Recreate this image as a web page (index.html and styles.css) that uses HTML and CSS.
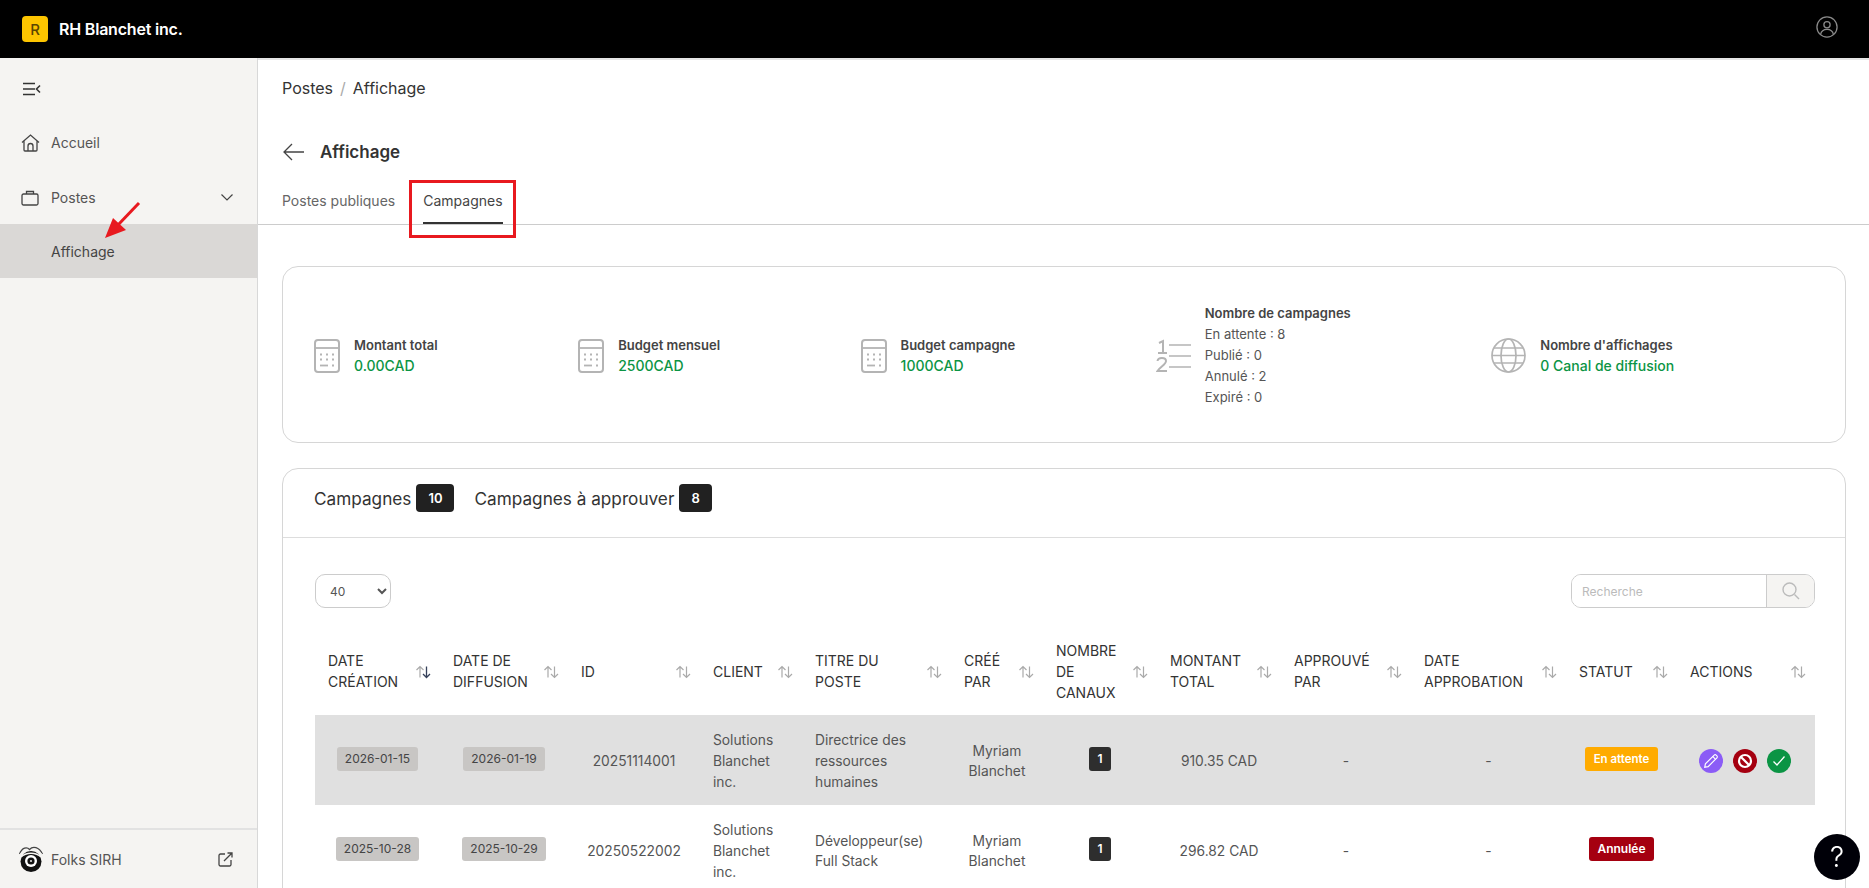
FILE: index.html
```html
<!DOCTYPE html>
<html lang="fr">
<head>
    <meta charset="UTF-8">
    <title>Affichage - RH Blanchet inc.</title>
    <link rel="stylesheet" href="styles.css">
</head>
<body>

<svg class="defs" width="0" height="0">
    <symbol id="sort" viewBox="0 0 16 16">
        <path d="M5 13.500V2.500M1.500 6l3.500-3.500L8.500 6" fill="none" stroke="#aaa" stroke-width="1.200"/>
        <path d="M11.500 2.500v11M8 10l3.500 3.500L15 10" fill="none" stroke="#aaa" stroke-width="1.200"/>
    </symbol>
    <symbol id="sort-active" viewBox="0 0 16 16">
        <path d="M5 13.500V2.500M1.500 6l3.500-3.500L8.500 6" fill="none" stroke="#aaa" stroke-width="1.200"/>
        <path d="M11.500 2.500v11M8 10l3.500 3.500L15 10" fill="none" stroke="#34405a" stroke-width="1.300"/>
    </symbol>
    <symbol id="calc" viewBox="0 0 26 34">
        <rect x="1" y="1" width="24" height="32" rx="3" fill="none" stroke="#b4b4b4" stroke-width="2"/>
        <path d="M1 9h24" stroke="#b4b4b4" stroke-width="1.800"/>
        <path d="M6 15.500h2M12 15.500h2M18 15.500h2M6 20.500h2M12 20.500h2M18 20.500h2M18 26.500h2" stroke="#b4b4b4" stroke-width="1.800"/>
        <path d="M6 26.500h8" stroke="#b4b4b4" stroke-width="1.800"/>
    </symbol>
</svg>

<header class="topbar">
    <div class="brand">
        <span class="brand-logo">R</span>
        <span class="brand-name">RH Blanchet inc.</span>
    </div>
    <svg class="user-icon" width="22" height="22" viewBox="0 0 24 24" fill="none" stroke="#8a8a8a" stroke-width="1.400">
        <circle cx="12" cy="12" r="11"/>
        <circle cx="12" cy="9.500" r="3.400"/>
        <path d="M5 20c.8-3.800 3.700-5.500 7-5.500s6.200 1.700 7 5.500"/>
    </svg>
</header>

<div class="layout">
    <aside class="sidebar">
        <div class="side-toggle">
            <svg width="18" height="14" viewBox="0 0 18 14" fill="none" stroke="#333" stroke-width="1.600">
                <path d="M0 1.500h12M0 7h12M0 12.500h12M17 3.500L13.500 7l3.500 3.500"/>
            </svg>
        </div>
        <nav class="side-nav">
            <a class="side-item">
                <svg width="19" height="18" viewBox="0 0 19 18" fill="none" stroke="#444" stroke-width="1.300">
                    <path d="M1 8.500L9.500 1 18 8.500M3 7v9a1 1 0 0 0 1 1h11a1 1 0 0 0 1-1V7M7 17v-5a2.500 2.500 0 0 1 5 0v5"/>
                </svg>
                Accueil
            </a>
            <a class="side-item side-item-open">
                <svg width="19" height="16" viewBox="0 0 19 16" fill="none" stroke="#444" stroke-width="1.300">
                    <rect x="1" y="4" width="16" height="11" rx="1.500"/>
                    <path d="M5.500 4V1.500h7V4"/>
                </svg>
                Postes
                <svg class="chevron" width="12" height="7" viewBox="0 0 12 7" fill="none" stroke="#444" stroke-width="1.200">
                    <path d="M.5.500L6 6l5.500-5.500"/>
                </svg>
            </a>
            <a class="side-sub">Affichage</a>
        </nav>
        <svg class="red-arrow" width="36" height="38" viewBox="0 0 36 38">
            <path d="M34 2L12 25" stroke="#e8191f" stroke-width="3" fill="none"/>
            <path d="M0 37l8-20 13 12z" fill="#e8191f"/>
        </svg>
        <div class="side-footer">
            <svg width="26" height="28" viewBox="0 0 26 28">
                <path d="M1.500 9C4 2.500 9 1.500 11.500 4.500 15 .5 21 2 24.500 9" fill="none" stroke="#444" stroke-width="1.200"/>
                <path d="M1.500 9.500C5 6 8 7 10.500 8.500c3-2 9-3 14 1" fill="none" stroke="#f5f4f2" stroke-width="1"/>
                <circle cx="13" cy="16.500" r="10.500" fill="#111"/>
                <path d="M3 12c5-5 15-5 20 0" fill="none" stroke="#f5f4f2" stroke-width="1.500"/>
                <circle cx="13" cy="16" r="6" fill="#fff"/>
                <circle cx="13" cy="16" r="3.600" fill="#111"/>
                <circle cx="13" cy="16" r="1.100" fill="#ddd"/>
            </svg>
            <span class="footer-label">Folks SIRH</span>
            <svg class="external" width="15" height="15" viewBox="0 0 15 15" fill="none" stroke="#444" stroke-width="1.300">
                <path d="M7 2H2.500A1.500 1.500 0 0 0 1 3.500v9A1.500 1.500 0 0 0 2.500 14h9a1.500 1.500 0 0 0 1.500-1.500V8M6 9l8-8M9.500 1H14v4.500"/>
            </svg>
        </div>
    </aside>

    <main class="main">
        <div class="breadcrumb">
            <span>Postes</span>
            <span class="crumb-sep">/</span>
            <span>Affichage</span>
        </div>
        <div class="page-title">
            <svg width="21" height="18" viewBox="0 0 21 18" fill="none" stroke="#444" stroke-width="1.300">
                <path d="M21 9H1M9 1L1 9l8 8"/>
            </svg>
            <h1>Affichage</h1>
        </div>
        <div class="page-tabs">
            <a class="page-tab">Postes publiques</a>
            <a class="page-tab page-tab-active">Campagnes</a>
        </div>

        <section class="card stats">
            <div class="stat">
                <svg width="26" height="34"><use href="#calc"/></svg>
                <div>
                    <div class="stat-title">Montant total</div>
                    <div class="stat-value">0.00CAD</div>
                </div>
            </div>
            <div class="stat">
                <svg width="26" height="34"><use href="#calc"/></svg>
                <div>
                    <div class="stat-title">Budget mensuel</div>
                    <div class="stat-value">2500CAD</div>
                </div>
            </div>
            <div class="stat">
                <svg width="26" height="34"><use href="#calc"/></svg>
                <div>
                    <div class="stat-title">Budget campagne</div>
                    <div class="stat-value">1000CAD</div>
                </div>
            </div>
            <div class="stat">
                <svg width="35" height="34" viewBox="0 0 35 34" fill="none" stroke="#b4b4b4" stroke-width="1.700">
                    <path d="M13 6h22M13 17h22M13 28h22"/>
                    <path d="M3 4l4-2v12M2 14h9" stroke-width="2"/>
                    <path d="M1.500 22c.5-4 8.500-4 8.500 0 0 3.500-6 6-8.500 10H11" stroke-width="2"/>
                </svg>
                <div>
                    <div class="stat-title">Nombre de campagnes</div>
                    <div class="stat-line">En attente : 8</div>
                    <div class="stat-line">Publié : 0</div>
                    <div class="stat-line">Annulé : 2</div>
                    <div class="stat-line">Expiré : 0</div>
                </div>
            </div>
            <div class="stat">
                <svg width="35" height="35" viewBox="0 0 35 35" fill="none" stroke="#b4b4b4" stroke-width="1.700">
                    <circle cx="17.500" cy="17.500" r="16.500"/>
                    <ellipse cx="17.500" cy="17.500" rx="7.500" ry="16.500"/>
                    <path d="M3 10h29M3 25h29M1 17.500h33"/>
                </svg>
                <div>
                    <div class="stat-title">Nombre d'affichages</div>
                    <div class="stat-value">0 Canal de diffusion</div>
                </div>
            </div>
        </section>

        <section class="card campaigns">
            <div class="campaign-tabs">
                <span class="campaign-tab">Campagnes <b class="count">10</b></span>
                <span class="campaign-tab">Campagnes à approuver <b class="count">8</b></span>
            </div>
            <div class="campaign-body">
                <div class="toolbar">
                    <select class="page-size">
                        <option>40</option>
                    </select>
                    <div class="search">
                        <input type="text" placeholder="Recherche">
                        <button class="search-btn">
                            <svg width="18" height="18" viewBox="0 0 18 18" fill="none" stroke="#bbb" stroke-width="1.400">
                                <circle cx="7.500" cy="7.500" r="6.500"/>
                                <path d="M12.500 12.500L17 17"/>
                            </svg>
                        </button>
                    </div>
                </div>

                <table class="grid">
                    <colgroup>
                        <col class="c-125"><col class="c-128"><col class="c-132"><col class="c-102">
                        <col class="c-149"><col class="c-92"><col class="c-114"><col class="c-124">
                        <col class="c-130"><col class="c-155"><col class="c-111"><col class="c-138">
                    </colgroup>
                    <thead>
                        <tr>
                            <th><div class="th-in"><span>Date<br>création</span><svg width="16" height="16"><use href="#sort-active"/></svg></div></th>
                            <th><div class="th-in"><span>Date de<br>diffusion</span><svg width="16" height="16"><use href="#sort"/></svg></div></th>
                            <th><div class="th-in"><span>ID</span><svg width="16" height="16"><use href="#sort"/></svg></div></th>
                            <th><div class="th-in"><span>Client</span><svg width="16" height="16"><use href="#sort"/></svg></div></th>
                            <th><div class="th-in"><span>Titre du<br>poste</span><svg width="16" height="16"><use href="#sort"/></svg></div></th>
                            <th><div class="th-in"><span>Créé<br>par</span><svg width="16" height="16"><use href="#sort"/></svg></div></th>
                            <th><div class="th-in"><span>Nombre<br>de<br>canaux</span><svg width="16" height="16"><use href="#sort"/></svg></div></th>
                            <th><div class="th-in"><span>Montant<br>total</span><svg width="16" height="16"><use href="#sort"/></svg></div></th>
                            <th><div class="th-in"><span>Approuvé<br>par</span><svg width="16" height="16"><use href="#sort"/></svg></div></th>
                            <th><div class="th-in"><span>Date<br>approbation</span><svg width="16" height="16"><use href="#sort"/></svg></div></th>
                            <th><div class="th-in"><span>Statut</span><svg width="16" height="16"><use href="#sort"/></svg></div></th>
                            <th><div class="th-in"><span>Actions</span><svg width="16" height="16"><use href="#sort"/></svg></div></th>
                        </tr>
                    </thead>
                    <tbody>
                        <tr class="row-hover">
                            <td><span class="tag tag-date">2026-01-15</span></td>
                            <td><span class="tag tag-date">2026-01-19</span></td>
                            <td>20251114001</td>
                            <td class="left">Solutions Blanchet inc.</td>
                            <td class="left">Directrice des ressources humaines</td>
                            <td>Myriam Blanchet</td>
                            <td><span class="tag tag-dark">1</span></td>
                            <td>910.35 CAD</td>
                            <td>-</td>
                            <td>-</td>
                            <td><span class="tag tag-pending">En attente</span></td>
                            <td>
                                <div class="actions">
                                    <span class="action action-edit">
                                        <svg width="16" height="16" viewBox="0 0 14 14" fill="none" stroke="#fff" stroke-width="1">
                                            <path d="M1.500 12.500l.6-3L9.800 1.800a1.200 1.200 0 0 1 1.700 0l.7.7a1.200 1.200 0 0 1 0 1.700L4.500 11.900z"/>
                                            <path d="M8.500 3l2.500 2.500"/>
                                        </svg>
                                    </span>
                                    <span class="action action-block">
                                        <svg width="16" height="16" viewBox="0 0 16 16" fill="none" stroke="#fff" stroke-width="2.200">
                                            <circle cx="8" cy="8" r="6"/>
                                            <path d="M4 4l8 8"/>
                                        </svg>
                                    </span>
                                    <span class="action action-ok">
                                        <svg width="14" height="12" viewBox="0 0 14 12" fill="none" stroke="#fff" stroke-width="1.300">
                                            <path d="M1.500 6.500L5 10l7.500-8.500"/>
                                        </svg>
                                    </span>
                                </div>
                            </td>
                        </tr>
                        <tr>
                            <td><span class="tag tag-date">2025-10-28</span></td>
                            <td><span class="tag tag-date">2025-10-29</span></td>
                            <td>20250522002</td>
                            <td class="left">Solutions Blanchet inc.</td>
                            <td class="left">Développeur(se) Full Stack</td>
                            <td>Myriam Blanchet</td>
                            <td><span class="tag tag-dark">1</span></td>
                            <td>296.82 CAD</td>
                            <td>-</td>
                            <td>-</td>
                            <td><span class="tag tag-cancel">Annulée</span></td>
                            <td></td>
                        </tr>
                    </tbody>
                </table>
            </div>
        </section>
    </main>
</div>

<button class="help">?</button>

</body>
</html>
```

FILE: styles.css
```css
* {
    box-sizing: border-box;
}

body {
    margin: 0;
    height: 888px;
    overflow: hidden;
    font-family: Inter, "Liberation Sans", sans-serif;
    color: #444;
    background-color: #fff;
}

.defs {
    position: absolute;
}

.topbar {
    height: 58px;
    padding: 0 31px 0 22px;
    display: flex;
    align-items: center;
    justify-content: space-between;
    background-color: #000;
}

.user-icon {
    margin-top: -4px;
}

.brand {
    display: flex;
    align-items: center;
    gap: 11px;
}

.brand-logo {
    width: 26px;
    height: 26px;
    display: flex;
    align-items: center;
    justify-content: center;
    border-radius: 4px;
    background-color: #fdc500;
    color: #5a4500;
    font-size: 15px;
    font-weight: 500;
}

.brand-name {
    color: #fff;
    font-size: 16px;
    font-weight: 600;
    letter-spacing: -0.2px;
}

.layout {
    display: flex;
    height: 830px;
}

/* sidebar */
.sidebar {
    position: relative;
    width: 258px;
    flex-shrink: 0;
    display: flex;
    flex-direction: column;
    background-color: #f5f4f2;
    border-right: 1px solid #d8d8d8;
}

.side-toggle {
    height: 50px;
    padding: 22px 0 0 23px;
}

.side-nav {
    flex: 1;
    padding-top: 6px;
}

.side-item {
    height: 55px;
    padding: 2px 0 0 21px;
    display: flex;
    align-items: center;
    gap: 11px;
    font-size: 14px;
    color: #555;
}

.chevron {
    margin-left: auto;
    margin-right: 24px;
}

.side-sub {
    display: block;
    height: 54px;
    line-height: 56px;
    padding-left: 51px;
    font-size: 14px;
    color: #444;
    background-color: #dad8d6;
}

.red-arrow {
    position: absolute;
    left: 105px;
    top: 143px;
}

.side-footer {
    height: 60px;
    padding: 0 24px 0 18px;
    display: flex;
    align-items: center;
    gap: 7px;
    border-top: 2px solid #e2e2e2;
}

.footer-label {
    font-size: 14px;
    color: #555;
}

.external {
    margin-left: auto;
}

/* main */
.main {
    flex: 1;
    min-width: 0;
    border-top: 2px solid #e6e6e6;
}

.breadcrumb {
    height: 56px;
    padding-left: 24px;
    display: flex;
    align-items: center;
    gap: 7px;
    font-size: 16px;
    color: #333;
}

.crumb-sep {
    color: #aaa;
}

.page-title {
    height: 42px;
    margin-top: 15px;
    padding-left: 25px;
    display: flex;
    align-items: center;
    gap: 16px;
}

.page-title h1 {
    margin: 0;
    font-size: 17px;
    font-weight: 600;
    color: #333;
}

.page-tabs {
    height: 59px;
    margin-top: -7px;
    padding: 0 24px;
    display: flex;
    align-items: flex-end;
    gap: 28px;
    border-bottom: 1px solid #ccc;
}

.page-tab {
    position: relative;
    height: 45px;
    padding-top: 13px;
    font-size: 14px;
    color: #666;
}

.page-tab-active {
    color: #444;
    border-bottom: 2px solid #333;
}

/* red box drawn on top of the screenshot */
.page-tab-active::after {
    content: "";
    position: absolute;
    left: -14px;
    right: -13px;
    top: 1px;
    height: 52px;
    border: 3px solid #e8191f;
}

.card {
    margin: 0 23px 0 24px;
    border: 1px solid #d6d6d6;
    border-radius: 16px;
    background-color: #fff;
}

/* stats */
.stats {
    height: 177px;
    margin-top: 41px;
    padding: 2px 0 0 31px;
    display: flex;
    align-items: center;
    gap: 140.5px;
}

.stat {
    display: flex;
    align-items: center;
    gap: 14px;
}

.stat-title {
    font-size: 13px;
    font-weight: 600;
    line-height: 21px;
    color: #444;
}

.stat-value {
    font-size: 14px;
    font-weight: 500;
    line-height: 20px;
    color: #0b9444;
}

.stat-line {
    font-size: 13px;
    line-height: 21px;
    color: #555;
}

/* campaigns */
.campaigns {
    margin-top: 25px;
    height: 600px;
}

.campaign-tabs {
    height: 69px;
    padding: 15px 31px 0;
    display: flex;
    align-items: flex-start;
    gap: 20px;
    border-bottom: 1px solid #ddd;
    font-size: 17.2px;
    color: #333;
}

.campaign-tab {
    display: flex;
    align-items: center;
    gap: 5px;
}

.count {
    min-width: 31px;
    height: 28px;
    padding: 0 12px;
    display: inline-flex;
    align-items: center;
    justify-content: center;
    border-radius: 4px;
    background-color: #212121;
    color: #fff;
    font-size: 13px;
    font-weight: 600;
}

.campaign-body {
    padding: 36px 30px 0 32px;
}

.toolbar {
    display: flex;
    justify-content: space-between;
    margin-bottom: 20px;
}

.page-size {
    width: 76px;
    height: 34px;
    padding-left: 10px;
    border: 1px solid #ccc;
    border-radius: 10px;
    background-color: #fff;
    font-family: inherit;
    font-size: 12px;
    color: #555;
}

.search {
    width: 244px;
    height: 34px;
    display: flex;
    border: 1px solid #ccc;
    border-radius: 10px;
    overflow: hidden;
}

.search input {
    flex: 1;
    min-width: 0;
    padding: 0 10px;
    border: none;
    border-right: 1px solid #ccc;
    font-family: inherit;
    font-size: 12px;
}

.search input::placeholder {
    color: #bbb;
}

.search-btn {
    width: 47px;
    padding: 0;
    display: flex;
    align-items: center;
    justify-content: center;
    border: none;
    background-color: #f5f4f2;
}

/* table */
.grid {
    width: 1500px;
    table-layout: fixed;
    border-collapse: collapse;
    font-size: 13.8px;
    line-height: 20.8px;
}

.c-125 { width: 125px; }
.c-128 { width: 128px; }
.c-132 { width: 132px; }
.c-102 { width: 102px; }
.c-149 { width: 149px; }
.c-92 { width: 92px; }
.c-114 { width: 114px; }
.c-124 { width: 124px; }
.c-130 { width: 130px; }
.c-155 { width: 155px; }
.c-111 { width: 111px; }
.c-138 { width: 138px; }

.grid th {
    padding: 13px 9px 12px 13px;
    font-size: 14px;
    font-weight: 400;
    text-align: left;
    text-transform: uppercase;
    color: #333;
}

.th-in {
    display: flex;
    align-items: center;
    justify-content: space-between;
}

.grid td {
    padding: 14.8px 13px 12.8px;
    text-align: center;
    vertical-align: middle;
    color: #555;
}

.grid td.left {
    text-align: left;
}

.row-hover td {
    background-color: #e0e0e0;
}

.tag {
    display: inline-block;
    height: 24px;
    padding: 0 8px;
    margin-bottom: 5px;
    line-height: 24px;
    border-radius: 3px;
    font-size: 12px;
    vertical-align: middle;
}

.tag-date {
    background-color: #c8c6c4;
    color: #444;
}

.tag-dark {
    background-color: #2e2e2e;
    color: #fff;
    font-weight: 600;
}

.tag-pending {
    padding: 0 9px;
    background-color: #ffab00;
    color: #fff;
    font-size: 11.5px;
    font-weight: 600;
}

.tag-cancel {
    background-color: #a50010;
    color: #fff;
    font-weight: 600;
}

.actions {
    display: flex;
    gap: 10px;
    padding-left: 9px;
}

.action {
    width: 24px;
    height: 24px;
    display: flex;
    align-items: center;
    justify-content: center;
    border-radius: 50%;
    flex-shrink: 0;
}

.action-edit {
    background-color: #8b5cf6;
}

.action-block {
    background-color: #a50010;
}

.action-ok {
    background-color: #0b9444;
}

.help {
    position: fixed;
    left: 1814px;
    top: 834px;
    width: 46px;
    height: 46px;
    padding: 0;
    border: none;
    border-radius: 50%;
    background-color: #000008;
    color: #fff;
    font-family: inherit;
    font-size: 28px;
    font-weight: 300;
}
```
